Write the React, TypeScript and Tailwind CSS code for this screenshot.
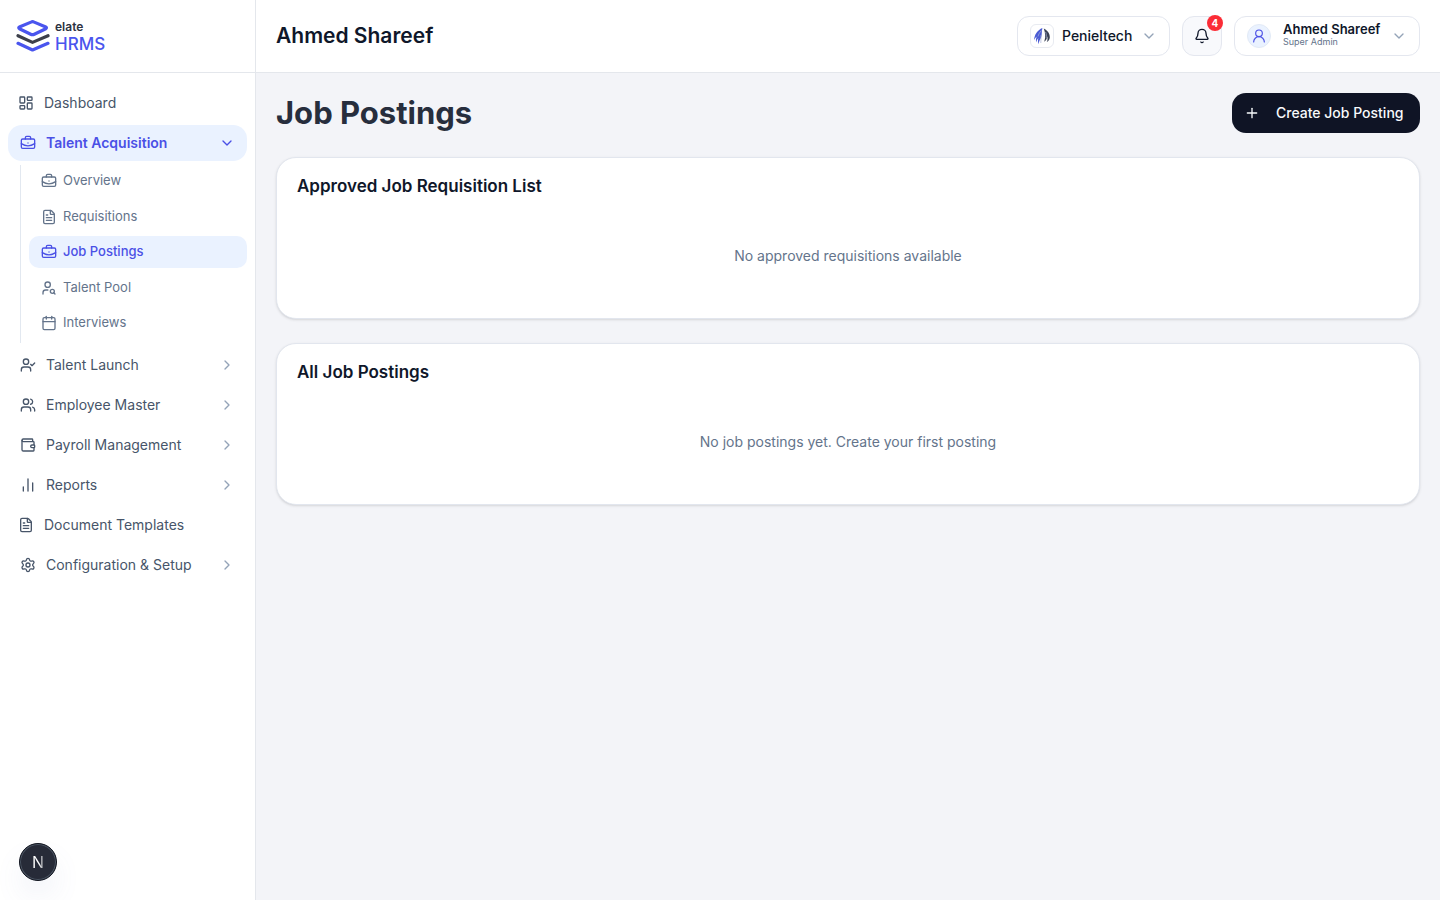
import React, { useState } from "react";
import {
    Bell,
    BriefcaseBusiness,
    Calendar,
    ChartNoAxesColumn,
    ChevronDown,
    ChevronRight,
    FileText,
    LayoutDashboard,
    Plus,
    Settings,
    UserCheck,
    UserRound,
    UserSearch,
    Users,
    Wallet,
    type LucideIcon,
} from "lucide-react";

interface NavItem {
    label: string;
    icon: LucideIcon;
    expandable?: boolean;
    children?: { label: string; icon: LucideIcon }[];
}

const navItems: NavItem[] = [
    { label: "Dashboard", icon: LayoutDashboard },
    {
        label: "Talent Acquisition",
        icon: BriefcaseBusiness,
        expandable: true,
        children: [
            { label: "Overview", icon: BriefcaseBusiness },
            { label: "Requisitions", icon: FileText },
            { label: "Job Postings", icon: BriefcaseBusiness },
            { label: "Talent Pool", icon: UserSearch },
            { label: "Interviews", icon: Calendar },
        ],
    },
    { label: "Talent Launch", icon: UserCheck, expandable: true },
    { label: "Employee Master", icon: Users, expandable: true },
    { label: "Payroll Management", icon: Wallet, expandable: true },
    { label: "Reports", icon: ChartNoAxesColumn, expandable: true },
    { label: "Document Templates", icon: FileText },
    { label: "Configuration & Setup", icon: Settings, expandable: true },
];

function Logo() {
    return (
        <div className="flex items-center gap-[5px]">
            <svg width="34" height="32" viewBox="0 0 34 32" fill="none" strokeWidth="3.2" strokeLinecap="round" strokeLinejoin="round">
                <path d="M2 23.3 16.5 30 32 23.3" stroke="#4a55ee" />
                <path d="M2 15.7 16.5 22.4 32 15.7" stroke="#3d404b" />
                <path d="M15 2.1 3.4 7c-.9.4-.9 1.3 0 1.7l11.3 5.5c1.2.6 2.4.6 3.6 0l11.5-5.5c.9-.4.9-1.3 0-1.7L18.2 2.1c-1-.5-2.2-.5-3.2 0Z" stroke="#4a55ee" />
            </svg>
            <div className="flex flex-col">
                <span className="text-xs leading-4 font-semibold text-[#2b3242]">elate</span>
                <span className="text-[17px] leading-[18px] font-medium text-[#4a55ee]">HRMS</span>
            </div>
        </div>
    );
}

function CompanyMark() {
    return (
        <svg width="18" height="18" viewBox="0 0 18 18" fill="none">
            <path d="M9.4 1C4.8 3 1.2 7.400 1.200 13.200c.7-1.600 1.500-2.700 2.500-3.600-.8 2-.9 3.900-.5 5.900.5-2 1.100-3.300 2.100-4.500-.5 2.200-.4 4.200.3 6.200.5-3.200 1.400-4.600 2.300-6.200C9.300 8.200 8.400 4.600 9.400 1Z" fill="#4a5bd4" />
            <path d="M10.800 1.400c3.800 2 6.200 5.200 6 9.200-.2 2.200-1.300 3.600-3 4.400 1-2.200.9-4 .3-5.800 0 2.600-1 4.400-2.900 5.600C12.600 10.600 12.500 6 10.800 1.400Z" fill="#3a4254" />
            <path d="M8.400 3.500C6.600 5.500 5.500 7.500 5 9.500M8 8c-.3 3 .3 5-.2 8M12.600 5c.8 2 .9 4 .5 6" stroke="#a9b3d8" strokeWidth=".7" />
        </svg>
    );
}

function Sidebar({ page, onSelect }: { page: string; onSelect: (label: string) => void }) {
    const [open, setOpen] = useState("Talent Acquisition");

    return (
        <aside className="flex w-64 shrink-0 flex-col border-r border-[#e4e7ec] bg-white">
            <div className="flex h-[73px] items-center border-b border-[#e4e7ec] px-4">
                <Logo />
            </div>
            <nav className="flex flex-col gap-1 px-2 py-3">
                {navItems.map(({ label, icon: Icon, expandable, children }) => {
                    const isOpen = expandable && open === label;
                    const Chevron = isOpen ? ChevronDown : ChevronRight;
                    return (
                        <React.Fragment key={label}>
                            <button
                                onClick={() => (expandable ? setOpen(isOpen ? "" : label) : onSelect(label))}
                                className={`flex h-9 items-center gap-2.5 rounded-[14px] text-left text-sm ${expandable ? "px-3" : "px-2.5"} ${isOpen
                                        ? "bg-[#eaf2ff] font-semibold text-[#4a50e6]"
                                        : "text-[#475569] hover:bg-slate-50"
                                    }`}
                            >
                                <Icon size={16} className="shrink-0" />
                                <span className="flex-1">{label}</span>
                                {expandable && <Chevron size={16} className={isOpen ? "" : "text-[#94a3b8]"} />}
                            </button>
                            {isOpen && children && (
                                <div className="ml-3 flex min-h-[178px] flex-col justify-between border-l border-[#e2e8f0] pb-1 pl-2">
                                    {children.map(({ label: childLabel, icon: ChildIcon }) => (
                                        <button
                                            key={childLabel}
                                            onClick={() => onSelect(childLabel)}
                                            className={`flex h-8 items-center gap-1.5 rounded-[10px] px-3 text-left text-[13px] ${page === childLabel
                                                    ? "bg-[#eaf2ff] font-medium text-[#4a50e6]"
                                                    : "text-[#64748b] hover:bg-slate-50"
                                                }`}
                                        >
                                            <ChildIcon size={16} className="shrink-0" />
                                            {childLabel}
                                        </button>
                                    ))}
                                </div>
                            )}
                        </React.Fragment>
                    );
                })}
            </nav>
        </aside>
    );
}

function Header() {
    return (
        <header className="flex h-[73px] items-center justify-between border-b border-[#e4e7ec] bg-white px-5">
            <div className="text-[21px] leading-7 font-semibold text-[#0f172a]">Ahmed Shareef</div>
            <div className="flex items-center gap-3">
                <button className="flex h-10 items-center gap-2 rounded-xl border border-[#e4e7ef] bg-white px-3">
                    <span className="flex h-6 w-6 items-center justify-center rounded-md border border-[#e8ebf1]">
                        <CompanyMark />
                    </span>
                    <span className="min-w-[71px] text-left text-sm font-medium text-[#0f172a]">Penieltech</span>
                    <ChevronDown size={16} className="text-[#94a3b8]" />
                </button>
                <button
                    aria-label="Notifications"
                    className="relative flex h-10 w-10 items-center justify-center rounded-xl border border-[#e4e7ef] bg-[#f8f9fc] text-[#0f172a]"
                >
                    <Bell size={16} />
                    <span className="absolute -top-0.5 -right-0.5 flex h-4 w-4 items-center justify-center rounded-full bg-[#fb2c36] text-[10px] leading-4 font-bold text-white">
                        4
                    </span>
                </button>
                <button className="flex h-10 items-center gap-2 rounded-xl border border-[#e4e7ef] bg-white px-3">
                    <span className="mr-1 flex h-6 w-6 items-center justify-center rounded-full border border-[#e2eaf6] bg-[#eaf2ff] text-[#4a50e6]">
                        <UserRound size={16} strokeWidth={1.75} />
                    </span>
                    <span className="flex min-w-[100px] flex-col pb-0.5 text-left">
                        <span className="text-[13px] leading-[14px] font-semibold text-[#0f172a]">Ahmed Shareef</span>
                        <span className="text-[9px] leading-3 text-[#64748b]">Super Admin</span>
                    </span>
                    <ChevronDown size={16} className="text-[#94a3b8]" />
                </button>
            </div>
        </header>
    );
}

function EmptyCard({ title, message }: { title: string; message: string }) {
    return (
        <section className="rounded-[20px] border border-[#e2e6ee] bg-white px-5 pt-4 pb-1 shadow-sm">
            <h2 className="text-[17px] leading-6 font-semibold text-[#0f172a]">{title}</h2>
            <p className="py-12 text-center text-sm text-[#64748b]">{message}</p>
        </section>
    );
}

export default function App() {
    const [page, setPage] = useState("Job Postings");

    return (
        <div className="flex min-h-screen bg-[#f3f4f8] font-['Inter',sans-serif]">
            <Sidebar page={page} onSelect={setPage} />
            <div className="flex min-w-0 flex-1 flex-col">
                <Header />
                <main className="flex flex-col gap-6 p-5">
                    <div className="flex items-center justify-between">
                        <h1 className="text-[31px] leading-10 font-bold text-[#272e3d]">Job Postings</h1>
                        <button className="flex h-10 min-w-[188px] items-center gap-4 rounded-[14px] bg-[#0f1425] px-3 text-sm font-medium text-[#f8fafc]">
                            <Plus size={16} />
                            Create Job Posting
                        </button>
                    </div>
                    <EmptyCard title="Approved Job Requisition List" message="No approved requisitions available" />
                    <EmptyCard title="All Job Postings" message="No job postings yet. Create your first posting" />
                </main>
            </div>

            {/* Dev tools badge */}
            <button
                aria-label="Open dev tools"
                className="fixed bottom-[19px] left-[19px] flex h-[38px] w-[38px] items-center justify-center rounded-full border border-[#10141f] bg-[#272b38] shadow-[inset_0_0_0_1px_#4b5563,0_16px_32px_-8px_rgba(100,116,180,0.24)]"
            >
                <span className="bg-linear-to-r from-white from-60% to-white/40 bg-clip-text text-base leading-5 text-transparent">N</span>
            </button>
        </div>
    );
}
